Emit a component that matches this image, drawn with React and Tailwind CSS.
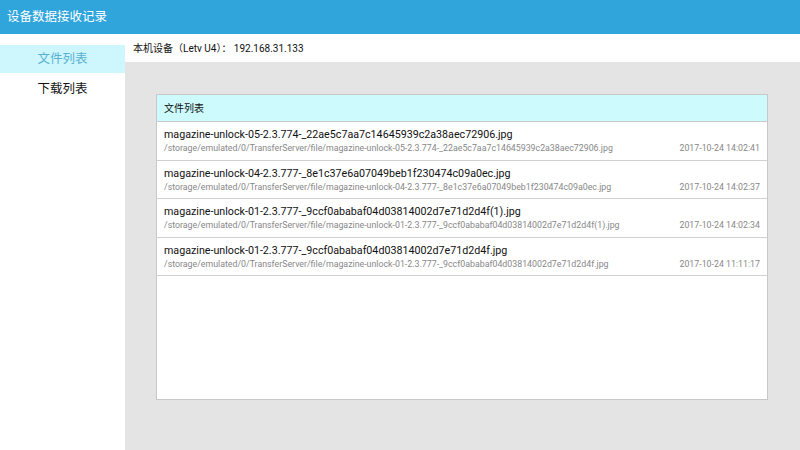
const files = [
  {
    name: "magazine-unlock-05-2.3.774-_22ae5c7aa7c14645939c2a38aec72906.jpg",
    time: "2017-10-24 14:02:41",
  },
  {
    name: "magazine-unlock-04-2.3.777-_8e1c37e6a07049beb1f230474c09a0ec.jpg",
    time: "2017-10-24 14:02:37",
  },
  {
    name: "magazine-unlock-01-2.3.777-_9ccf0ababaf04d03814002d7e71d2d4f(1).jpg",
    time: "2017-10-24 14:02:34",
  },
  {
    name: "magazine-unlock-01-2.3.777-_9ccf0ababaf04d03814002d7e71d2d4f.jpg",
    time: "2017-10-24 11:11:17",
  },
];

export default function App() {
  return (
    <div
      className="w-[800px] h-[450px] flex flex-col overflow-hidden bg-white"
      style={{ fontFamily: 'Roboto, "Noto Sans CJK SC", sans-serif' }}
    >
      {/* header */}
      <div className="h-[34px] shrink-0 bg-[#2fa5dc] flex items-center pl-[7px] text-white text-[12.5px]">
        设备数据接收记录
      </div>

      <div className="flex flex-1 min-h-0">
        {/* sidebar */}
        <div className="w-[125px] shrink-0 bg-white pt-[11px] flex flex-col">
          <div className="h-[28px] bg-[#cdf6fd] flex items-center justify-center text-[12.5px] text-[#5ab0d2]">
            文件列表
          </div>
          <div className="h-[32px] flex items-center justify-center text-[12.5px] text-[#111]">
            下载列表
          </div>
        </div>

        {/* main */}
        <div className="flex-1 bg-[#e4e4e4] flex flex-col">
          <div className="h-[28px] bg-white flex items-center pl-[8px] text-[10px] text-[#111]">
            本机设备（Letv U4）： 192.168.31.133
          </div>

          <div className="pl-[31px] pr-[32px] pt-[32px]">
            <div className="h-[306px] bg-white border border-[#c8c8c8] flex flex-col">
              <div className="h-[27px] bg-[#cdfbfd] border-b border-[#c8c8c8] flex items-center pl-[7px] text-[10px] text-[#111]">
                文件列表
              </div>
              {files.map((f) => (
                <div
                  key={f.name}
                  className="h-[38.5px] border-b border-[#d0d0d0] flex flex-col justify-center px-[7px]"
                >
                  <div className="text-[10.7px] leading-[15px] text-[#111]">{f.name}</div>
                  <div className="flex justify-between text-[8.8px] leading-[12px] text-[#888]">
                    <span>/storage/emulated/0/TransferServer/file/{f.name}</span>
                    <span>{f.time}</span>
                  </div>
                </div>
              ))}
            </div>
          </div>
        </div>
      </div>
    </div>
  );
}
